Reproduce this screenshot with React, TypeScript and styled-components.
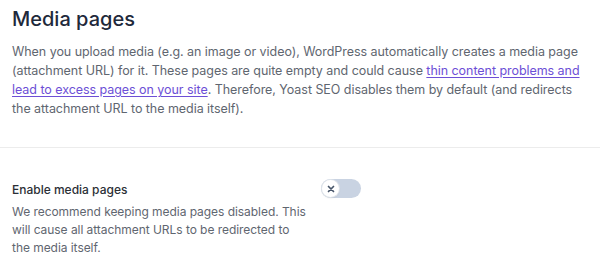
import React, { useState } from 'react';
import styled, { createGlobalStyle } from 'styled-components';

const GlobalStyle = createGlobalStyle`
    body {
        margin: 0;
        background: #fff;
        font-family: Inter, 'Noto Sans', sans-serif;
        -webkit-font-smoothing: antialiased;
    }
`;

const Section = styled.section`
    padding: 4px 12px 29px;
`;

const Title = styled.h2`
    margin: 0 0 8px;
    font-size: 20px;
    line-height: 30px;
    font-weight: 500;
    color: #1e293b;
`;

const Text = styled.p<{ $width?: number; $size?: number; $lh?: number }>`
    margin: 0;
    font-size: ${(p) => p.$size ?? 12.5}px;
    line-height: ${(p) => p.$lh ?? 19}px;
    letter-spacing: -0.05px;
    color: #5f6670;
    max-width: ${(p) => (p.$width ? `${p.$width}px` : 'none')};
`;

const Link = styled.a`
    color: #6d4fd6;
    text-decoration: underline;
    text-underline-offset: 2px;
`;

const Divider = styled.hr`
    margin: 0;
    border: 0;
    border-top: 1px solid #ececec;
`;

const SettingRow = styled.div`
    display: grid;
    grid-template-columns: 309px 1fr;
    padding: 32px 12px 0;
`;

const Label = styled.div`
    font-size: 12px;
    line-height: 19px;
    font-weight: 500;
    color: #2b2f36;
    margin-bottom: 4px;
`;

const Track = styled.button<{ $on: boolean }>`
    position: relative;
    width: 40px;
    height: 19px;
    margin-top: -1px;
    padding: 0;
    border: 0;
    border-radius: 10px;
    background: ${(p) => (p.$on ? '#6d4fd6' : '#c9d3e2')};
    cursor: pointer;
`;

const Knob = styled.span<{ $on: boolean }>`
    position: absolute;
    top: 1px;
    left: ${(p) => (p.$on ? '22px' : '1px')};
    width: 17px;
    height: 17px;
    border-radius: 50%;
    background: #fff;
    box-shadow: 0 0 0 1px #dfe4ea, 0 1px 2px rgba(0, 0, 0, 0.12);
    display: flex;
    align-items: center;
    justify-content: center;
`;

export default function App() {
    const [enabled, setEnabled] = useState(false);

    return (
        <>
            <GlobalStyle />
            <Section>
                <Title>Media pages</Title>
                <Text>
                    When you upload media (e.g. an image or video), WordPress automatically creates a media page
                    (attachment URL) for it. These pages are quite empty and could cause{' '}
                    <Link href="#">thin content problems and lead to excess pages on your site</Link>. Therefore, Yoast
                    SEO disables them by default (and redirects the attachment URL to the media itself).
                </Text>
            </Section>
            <Divider />
            <SettingRow>
                <div>
                    <Label>Enable media pages</Label>
                    <Text $width={295} $size={12} $lh={18}>
                        We recommend keeping media pages disabled. This will cause all attachment URLs to be redirected
                        to the media itself.
                    </Text>
                </div>
                <div>
                    <Track $on={enabled} onClick={() => setEnabled(!enabled)} aria-label="Enable media pages">
                        <Knob $on={enabled}>
                            {!enabled && (
                                <svg width="8" height="8" viewBox="0 0 8 8">
                                    <path d="M1.5 1.5l5 5M6.5 1.5l-5 5" stroke="#475569" strokeWidth="1.7" strokeLinecap="round" />
                                </svg>
                            )}
                        </Knob>
                    </Track>
                </div>
            </SettingRow>
        </>
    );
}
